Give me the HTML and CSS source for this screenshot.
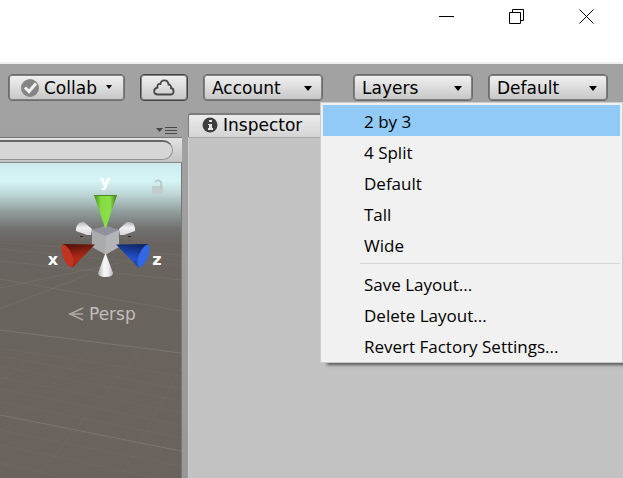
FILE: index.html
```html
<!DOCTYPE html>
<html lang="en">
<head>
<meta charset="utf-8">
<title>Editor layout</title>
<link rel="stylesheet" href="styles.css">
</head>
<body>
<header class="titlebar">
  <button class="window-button" aria-label="Minimize"><svg width="16" height="16" viewBox="0 0 16 16"><path d="M0 8.5h15"/></svg></button>
  <button class="window-button" aria-label="Restore"><svg width="16" height="16" viewBox="0 0 16 16"><path d="M.5 4.500h11v11H.5zM3.500 4V1.500h11v11H12"/></svg></button>
  <button class="window-button" aria-label="Close"><svg width="16" height="16" viewBox="0 0 16 16"><path d="M.5 1.500l14 14M14.500 1.500l-14 14"/></svg></button>
</header>
<div class="toolbar">
  <button class="control collab">
    <svg width="20" height="20" viewBox="0 0 20 20"><circle cx="10" cy="10" r="9" fill="#858585"/><path d="M5 9.500l4 4 7-8" fill="none" stroke="#f2f2f2" stroke-width="3"/></svg>
    <span>Collab</span>
    <svg width="8" height="5" viewBox="0 0 8 5"><path d="M1 0h6L4 4z"/></svg>
  </button>
  <button class="control cloud" aria-label="Cloud services">
    <svg width="22" height="17" viewBox="0 0 22 17"><path d="M5 15.500h12.500c4 0 4-6 .5-6.500 .5-2-1-3.500-2.500-3.500C15 0 8 0 7.500 5 5 4.500 4 6.500 4.500 8.500 0 9.500 0 15.500 5 15.500z" fill="none" stroke="#484848" stroke-width="1.800"/></svg>
  </button>
  <span class="dropdown">
    <select class="control" aria-label="Account"><option>Account</option></select>
    <svg class="arrow" width="8" height="5" viewBox="0 0 8 5"><path d="M0 0h8L4 5z"/></svg>
  </span>
  <span class="dropdown layers">
    <select class="control" aria-label="Layers"><option>Layers</option></select>
    <svg class="arrow" width="8" height="5" viewBox="0 0 8 5"><path d="M0 0h8L4 5z"/></svg>
  </span>
  <span class="dropdown">
    <select class="control" aria-label="Layout"><option>Default</option></select>
    <svg class="arrow" width="8" height="5" viewBox="0 0 8 5"><path d="M0 0h8L4 5z"/></svg>
  </span>
  <div class="menu" role="menu">
    <button class="menu-item selected" role="menuitem">2 by 3</button>
    <button class="menu-item" role="menuitem">4 Split</button>
    <button class="menu-item" role="menuitem">Default</button>
    <button class="menu-item" role="menuitem">Tall</button>
    <button class="menu-item" role="menuitem">Wide</button>
    <hr class="separator">
    <button class="menu-item" role="menuitem">Save Layout...</button>
    <button class="menu-item" role="menuitem">Delete Layout...</button>
    <button class="menu-item" role="menuitem">Revert Factory Settings...</button>
  </div>
</div>
<main class="workspace">
  <section class="scene-pane">
    <div class="pane-tabs">
      <button class="pane-menu" aria-label="Pane options"><svg width="21" height="9" viewBox="0 0 21 9"><path d="M0 2h7L3.500 6z" fill="#484848"/><path d="M9 1.500h12M9 4.500h12M9 7.500h12" stroke="#484848"/></svg></button>
    </div>
    <div class="scene-toolbar"><input class="search" type="text" aria-label="Search scene"></div>
    <div class="scene">
      <svg class="ground" viewBox="0 0 182 315" preserveAspectRatio="none" fill="none" stroke="#8b8884">
        <path d="M0 167L182 190M0 252L182 288" stroke-opacity=".5"/>
        <path d="M0 146L90 111M0 125L120 100M0 116L182 148M0 98L182 117" stroke-opacity=".25"/>
        <g stroke-opacity=".15">
          <path d="M0 185L182 213M0 193L182 226M0 203L182 238M0 214L182 250M0 226L182 262M0 239L182 275M0 267L182 303M0 282L182 320M0 300L100 322"/>
          <path d="M0 220L45 185M-5 275L92 187M38 313L141 187M122 313L182 205M140 90L182 99M0 86L182 103M0 80L182 92"/>
        </g>
      </svg>
      <div class="orientation">
        <svg class="gizmo" width="122" height="112" viewBox="46 170 122 112">
          <defs>
            <linearGradient id="green"><stop stop-color="#4b8b22"/><stop offset=".3" stop-color="#83dc40"/><stop offset=".7" stop-color="#8be04a"/><stop offset="1" stop-color="#3b711b"/></linearGradient>
            <linearGradient id="red" x1=".4" y1="0" x2=".6" y2="1"><stop stop-color="#54130b"/><stop offset=".6" stop-color="#b52a17"/><stop offset="1" stop-color="#841b0f"/></linearGradient>
            <linearGradient id="blue" x1=".6" y1="0" x2=".4" y2="1"><stop stop-color="#102564"/><stop offset=".6" stop-color="#2352cf"/><stop offset="1" stop-color="#173885"/></linearGradient>
            <linearGradient id="white"><stop stop-color="#aaa"/><stop offset=".4" stop-color="#f7f7f8"/><stop offset=".7" stop-color="#ececee"/><stop offset="1" stop-color="#b3b3b8"/></linearGradient>
            <linearGradient id="side" x2="0" y2="1"><stop stop-color="#b3b3b9"/><stop offset=".45" stop-color="#f0f0f2"/><stop offset="1" stop-color="#d7d7dc"/></linearGradient>
          </defs>
          <path d="M92 230L105.500 226 119 230V247L105.500 254.500 92 247z" fill="#aaabad"/>
          <path d="M92 230L105.500 226 119 230 105.500 236z" fill="#8f929b"/>
          <path d="M105.500 236L119 230V247L105.500 254.500z" fill="#b3b4b7"/>
          <path d="M92 229L84 222Q78 221 76 228V231L87 235 91 235z" fill="url(#side)"/>
          <path d="M119 229L127 222Q134 221 135 228V231L124 235 120 235z" fill="url(#side)"/>
          <path d="M80 236.500h3M128 236.500h3" stroke="#292929"/>
          <path d="M94 195h23l-11 33h-1z" fill="url(#green)"/>
          <path d="M94 195.500h23" stroke="#4b8928"/>
          <path d="M105.500 253L98 273Q98 277 105.500 277T113 273z" fill="url(#white)"/>
          <path d="M95 244.500L63 244 72 268z" fill="url(#red)"/>
          <ellipse cx="67.500" cy="256" rx="4.500" ry="12" transform="rotate(-22 67.500 256)" fill="#c13520"/>
          <path d="M116 244.500L148 244 139 268z" fill="url(#blue)"/>
          <ellipse cx="143.500" cy="256" rx="4.500" ry="12" transform="rotate(22 143.500 256)" fill="#3267e5"/>
          <g class="axis"><text x="105" y="187">y</text><text x="53" y="265">x</text><text x="157" y="265">z</text></g>
          <path d="M152 186h11v8h-11z" fill="#c4cccc"/><path d="M155 182q3-3 6 0v4" fill="none" stroke="#bccaca" stroke-width="2"/>
        </svg>
        <button class="persp"><svg width="16" height="14" viewBox="0 0 16 14"><path d="M15 1L2 7l13 6M1 7h14" fill="none" stroke="#aaa8a6" stroke-width="1.500"/></svg>Persp</button>
      </div>
    </div>
  </section>
  <section class="inspector-pane">
    <h1 class="inspector-tab"><svg width="16" height="16" viewBox="0 0 16 16"><circle cx="8" cy="8" r="7.500" fill="#3e3e3e"/><path d="M7 3h3v2H7zM6 7h4v4h1v2H6v-2h1V8H6z" fill="#e4e4e4"/></svg>Inspector</h1>
    <div class="inspector-body"></div>
  </section>
</main>
</body>
</html>
```
FILE: styles.css
```css
* { box-sizing: border-box; }
body {
  margin: 0;
  min-height: 100vh;
  display: flex;
  flex-direction: column;
  background: #a2a2a2;
  color: #000;
  font: 17px/24px "DejaVu Sans", sans-serif;
}
button, select, input { font: inherit; color: inherit; margin: 0; }
button { padding: 0; border: 0; background: none; text-align: left; }
svg { display: block; flex: none; }

.titlebar {
  height: 64px;
  display: flex;
  justify-content: flex-end;
  align-items: flex-start;
  gap: 54px;
  padding: 8px 28px 0 0;
  background: #fff;
  border-bottom: 2px solid #f0f0f0;
}
.window-button svg { fill: none; stroke: #000; }

.toolbar {
  position: relative;
  display: flex;
  gap: 15px;
  padding: 10px 15px 0 8px;
}
.control {
  display: block;
  height: 27px;
  border: 1px solid #6c6c6c;
  border-radius: 4px;
  background: linear-gradient(#f2f2f2, #c6c6c6);
  box-shadow: inset 0 0 0 1px #808080;
}
.collab {
  width: 117px;
  display: flex;
  align-items: center;
  gap: 4px;
  padding: 0 11px;
}
.collab span { flex: 1; }
.cloud {
  width: 48px;
  display: flex;
  align-items: center;
  justify-content: center;
  border-color: #444;
}
.dropdown { position: relative; width: 120px; }
.dropdown .control {
  width: 100%;
  padding: 0 24px 0 8px;
  appearance: none;
}
.arrow { position: absolute; right: 11px; top: 12px; pointer-events: none; }
.layers { margin-left: auto; }

.menu {
  position: absolute;
  z-index: 2;
  top: 38px;
  right: 0;
  width: 303px;
  padding: 2px 2px 1px;
  border: 1px solid #ccc;
  background: #f1f1f1;
  box-shadow: 5px 4px 3px -2px #555;
  font: 17px/29px "Open Sans", sans-serif;
}
.menu-item {
  display: block;
  width: 100%;
  height: 31px;
  padding: 1px 0 0 41px;
}
.selected { background: #91c9f7; }
.separator {
  height: 1px;
  margin: 3px 0 4px 37px;
  border: 0;
  background: #d5d5d5;
}

.workspace {
  flex: 1;
  display: grid;
  grid-template-columns: minmax(182px, 29%) 1fr;
  column-gap: 6px;
  background: linear-gradient(#a2a2a2, #989898);
}
.scene-pane, .inspector-pane { display: flex; flex-direction: column; }
.pane-tabs {
  height: 36px;
  display: flex;
  justify-content: flex-end;
  align-items: flex-end;
  padding: 0 5px 2px;
}
.scene-toolbar {
  height: 26px;
  padding: 2px 9px 2px 0;
  border-top: 1px solid #777;
  border-bottom: 1px solid #888;
  background: linear-gradient(#e2e2e2, #c4c4c4);
}
.search {
  display: block;
  width: 100%;
  height: 20px;
  border: 1px solid #929292;
  border-top: 2px solid #666;
  border-left: 0;
  border-radius: 0 10px 10px 0;
  background: #d6d6d6;
}
.scene {
  position: relative;
  flex: 1;
  border-right: 1px solid #777;
  background: linear-gradient(#cdebee, #d5f5f5 18px, #bcd4d4 32px, #92a09f 48px, #70706f 66px, #69645f 80px, #6a625d);
}
.ground { position: absolute; width: 100%; height: 100%; }
.orientation { position: absolute; top: 7px; right: 13px; width: 122px; }
.axis { fill: #fff; font-size: 16px; font-weight: bold; text-anchor: middle; }
.persp {
  display: flex;
  align-items: center;
  gap: 5px;
  margin: 20px 0 0 22px;
  color: #c0bebc;
}

.inspector-tab {
  display: flex;
  align-items: center;
  gap: 5px;
  height: 24px;
  margin: 12px 0 0;
  padding: 0 0 2px 13px;
  border-top: 2px solid #7c7c7c;
  border-left: 1px solid #7c7c7c;
  border-radius: 3px 0 0 0;
  background: linear-gradient(#ececec, #d4d4d4);
  font-size: 17px;
  font-weight: normal;
}
.inspector-body {
  flex: 1;
  border-top: 1px solid #aaa;
  border-left: 1px solid #ccc;
  background: #c2c2c2;
}
```
